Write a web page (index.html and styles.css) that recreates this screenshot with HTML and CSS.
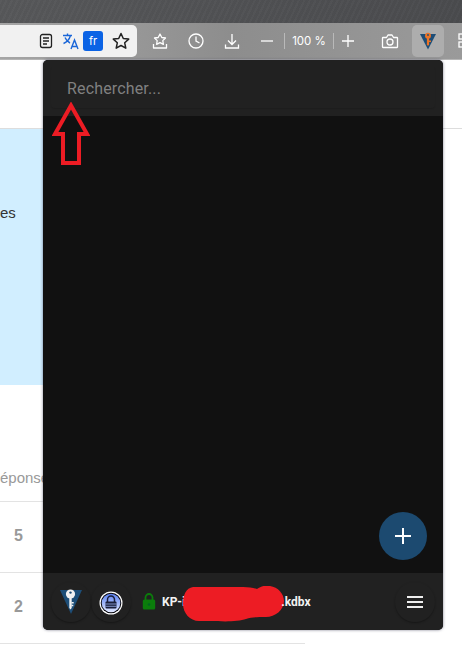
FILE: index.html
```html
<!DOCTYPE html>
<html lang="fr">
<head>
  <meta charset="UTF-8" />
  <meta name="viewport" content="width=device-width, initial-scale=1.0" />
  <title>KeePass popup</title>
  <link rel="stylesheet" href="styles.css">
</head>
<body>

<div class="window">
  <div class="titlebar"></div>

  <!-- Browser toolbar -->
  <div class="toolbar">
    <div class="address">
      <svg class="addr-icon" width="18" height="18" viewBox="0 0 18 18" fill="none" stroke="#222" stroke-width="1.3"><rect x="3.500" y="2.500" width="11" height="13" rx="2"/><path d="M6 6h6M6 9h6M6 12h4"/></svg>
      <svg class="addr-translate" width="18" height="18" viewBox="0 0 18 18" fill="none" stroke="#1a66d8" stroke-width="1.4"><path d="M1 3.500h9M5.500 1.500v2M8.500 3.500C7.500 7 5 10 1.500 11.500M3 5.500c1 2.500 3 4.500 5 5.500"/><path d="M9 17l3.500-9 3.500 9M10.200 14.500h4.600"/></svg>
      <span class="lang">fr</span>
      <svg class="addr-star" width="20" height="20" viewBox="0 0 20 20" fill="none" stroke="#222" stroke-width="1.500" stroke-linejoin="round"><path d="M10 2.500l2.300 5 5.400.6-4 3.700 1.100 5.400-4.800-2.700-4.800 2.700 1.100-5.400-4-3.700 5.400-.6z"/></svg>
    </div>

    <div class="tool tool-first">
      <svg width="18" height="18" viewBox="0 0 18 18" fill="none" stroke="#fff" stroke-width="1.300" stroke-linejoin="round"><path d="M9 2l1.800 3.500 3.700.5-2.700 2.600.6 3.700L9 10.600 5.600 12.300l.6-3.700L3.500 6l3.700-.5z"/><path d="M2.500 12v4h13v-4"/></svg>
    </div>
    <div class="tool">
      <svg width="18" height="18" viewBox="0 0 18 18" fill="none" stroke="#fff" stroke-width="1.300"><circle cx="9" cy="9" r="7"/><path d="M9 4.500V9l3.500 2"/></svg>
    </div>
    <div class="tool">
      <svg width="18" height="18" viewBox="0 0 18 18" fill="none" stroke="#fff" stroke-width="1.300"><path d="M9 2v10M5 8.500l4 4 4-4M2.500 12.500v3.500h13v-3.500"/></svg>
    </div>
    <div class="tool tool-minus">
      <svg width="14" height="14" viewBox="0 0 14 14" fill="none" stroke="#fff" stroke-width="1.300"><path d="M1 7h12"/></svg>
    </div>
    <div class="zoom-level">100 %</div>
    <div class="tool tool-plus">
      <svg width="14" height="14" viewBox="0 0 14 14" fill="none" stroke="#fff" stroke-width="1.300"><path d="M1 7h12M7 1v12"/></svg>
    </div>
    <div class="tool tool-camera">
      <svg width="18" height="18" viewBox="0 0 18 18" fill="none" stroke="#fff" stroke-width="1.300" stroke-linejoin="round"><path d="M2 5.500h3.500L7 3h4l1.500 2.500H16a.5.500 0 0 1 .5.500v9a.5.500 0 0 1-.5.500H2a.5.500 0 0 1-.5-.500V6a.5.500 0 0 1 .5-.500z"/><circle cx="9" cy="10" r="3"/></svg>
    </div>
    <div class="ext-btn">
      <svg width="18" height="18" viewBox="0 0 18 18"><path d="M1 2h16L9 17.500z" fill="#1d4e78"/><circle cx="9" cy="3.800" r="3" fill="#ec7426"/><path d="M7.900 5h2.200v7.500L9 14l-1.100-1.500z" fill="#ec7426"/><path d="M10 8.500h2v1.400h-2z" fill="#ec7426"/><circle cx="9" cy="3" r=".9" fill="#1d4e78"/></svg>
    </div>
    <div class="tool tool-puzzle">
      <svg width="18" height="18" viewBox="0 0 18 18" fill="none" stroke="#fff" stroke-width="1.300"><rect x="2" y="2" width="5" height="5"/><rect x="2" y="10" width="5" height="5"/></svg>
    </div>
  </div>

  <!-- Web page behind the popup -->
  <div class="page">
    <div class="page-head"></div>
    <div class="notice"><span>es</span></div>
    <div class="answers">
      <div class="answers-title">éponses</div>
      <div class="row">5</div>
      <div class="row">2</div>
    </div>
  </div>

  <!-- Extension popup -->
  <div class="popup">
    <div class="popup-head">
      <div class="search">Rechercher...</div>
    </div>
    <div class="popup-body">
      <button class="fab">
        <svg width="18" height="18" viewBox="0 0 18 18" fill="none" stroke="#fff" stroke-width="2"><path d="M1 9h16M9 1v16"/></svg>
      </button>
    </div>
    <div class="popup-foot">
      <div class="round round-logo">
        <svg width="24" height="26" viewBox="0 0 24 26"><path d="M1 1h22L12 25z" fill="#1d4e78"/><circle cx="11.500" cy="5" r="4.600" fill="#f2f2f2"/><circle cx="11.500" cy="3.600" r="1.200" fill="#1d4e78"/><path d="M10.300 8h2.400v11l-1.200 1.500-1.200-1.500z" fill="#f2f2f2"/><path d="M12.500 13h2.200v1.400h-2.200zM12.500 15.800h1.800v1.400h-1.800z" fill="#f2f2f2"/></svg>
      </div>
      <div class="round round-kp">
        <svg width="24" height="24" viewBox="0 0 24 24">
          <defs><linearGradient id="kpBlue" x1="0" y1="0" x2="0" y2="1"><stop offset="0" stop-color="#5a80f2"/><stop offset="1" stop-color="#e2e9ff"/></linearGradient></defs>
          <circle cx="12" cy="12" r="11.500" fill="#fff"/><circle cx="12" cy="12" r="10.300" fill="#06060c"/><circle cx="12" cy="12" r="9.300" fill="url(#kpBlue)"/>
          <path d="M8.500 11V8.500a3.500 3.500 0 0 1 7 0V11" fill="none" stroke="#1a1f3a" stroke-width="1.500"/><rect x="6.500" y="10.500" width="11" height="7" rx="1" fill="#1a1f3a"/><path d="M6.500 13h11M6.500 15.300h11" stroke="#9db2f0" stroke-width=".8"/>
        </svg>
      </div>
      <svg class="db-lock" width="14" height="17" viewBox="0 0 14 17"><path d="M3.500 7V4.500a3.500 3.500 0 0 1 7 0V7" fill="none" stroke="#0b7d0b" stroke-width="1.800"/><rect x=".8" y="6.500" width="12.400" height="10" rx="1.500" fill="#0b7d0b"/><circle cx="7" cy="11.500" r="1.300" fill="#062"/></svg>
      <div class="db-name">
        <span>KP-i</span>
        <span class="blot">
          <svg width="101" height="36" viewBox="0 0 101 36"><path d="M10 1h50c6 0 10 1 14 2 4-3 9-4 13-3 8 1 14 8 14 15 0 9-9 16-18 16-8 0-14 0-20 2-6 2-20 3-28 2H16C7 35 0 27 0 18 0 9 3 2 10 1z" fill="#ed1c24"/></svg>
        </span>
        <span>.kdbx</span>
      </div>
      <div class="round round-menu">
        <svg width="18" height="14" viewBox="0 0 18 14" fill="none" stroke="#eee" stroke-width="1.800"><path d="M1 2h16M1 7h16M1 12h16"/></svg>
      </div>
    </div>
  </div>

  <!-- Annotation arrow drawn on the screenshot -->
  <svg class="arrow" width="38" height="64" viewBox="0 0 38 64" fill="none" stroke="#ed1c24" stroke-width="4"><path d="M19 3.500L3 32H11V61H27V32H35z"/></svg>
</div>

</body>
</html>
```

FILE: styles.css
```css
*, *::before, *::after { box-sizing: border-box; margin: 0; padding: 0; }

body {
  background: #fff;
  font-family: 'Liberation Sans', Arial, sans-serif;
}

.window {
  position: relative;
  width: 462px;
  height: 657px;
  overflow: hidden;
}

.titlebar {
  height: 23px;
  background:
    repeating-linear-gradient(115deg, rgba(255,255,255,.015) 0 2px, rgba(0,0,0,.02) 2px 5px),
    linear-gradient(90deg, #57585a, #4a4b4e);
}

.toolbar {
  display: flex;
  align-items: center;
  height: 37px;
  padding-bottom: 1px;
  background: linear-gradient(90deg, #a5a5a5 0%, #8d8d8d 50%, #9a9a9a 100%);
  border-bottom: 1px solid #b5b5b5;
}

.address {
  display: flex;
  align-items: center;
  flex: none;
  width: 137px;
  height: 32px;
  background: #f1f1f1;
  border-radius: 0 5px 5px 0;
}

.addr-icon { margin-left: 37px; }
.addr-translate { margin-left: 7px; }

.lang {
  width: 20px;
  height: 20px;
  margin-left: 3px;
  background: #0b63e5;
  border-radius: 3px;
  color: #fff;
  font-size: 11px;
  line-height: 20px;
  text-align: center;
  font-family: 'Inter', sans-serif;
}

.addr-star { margin-left: 8px; }

.tool {
  display: flex;
  align-items: center;
  justify-content: center;
  flex: none;
  width: 36px;
  height: 32px;
}

.tool-first { margin-left: 5px; }
.tool-minus { width: 34px; }
.tool-plus { width: 28px; }
.tool-camera { margin-left: 10px; }
.tool-puzzle { margin-left: 4px; }

.zoom-level {
  flex: none;
  width: 50px;
  height: 16px;
  border-left: 1px solid #b9b9b9;
  border-right: 1px solid #b9b9b9;
  color: #fff;
  font-family: 'Inter', sans-serif;
  font-size: 11.500px;
  line-height: 16px;
  text-align: center;
}

.ext-btn {
  display: flex;
  align-items: center;
  justify-content: center;
  flex: none;
  width: 32px;
  height: 32px;
  margin-left: 4px;
  background: #adadad;
  border-radius: 5px;
}

.page {
  color: #333;
}

.page-head {
  height: 69px;
  border-bottom: 1px solid #ddd;
}

.notice {
  width: 300px;
  height: 256px;
  padding-top: 75px;
  background: #d1eeff;
  font-size: 15px;
  line-height: 17px;
}

.answers {
  width: 305px;
  padding-top: 84px;
  color: #999;
}

.answers-title {
  height: 33px;
  border-bottom: 1px solid #e3e3e3;
  font-size: 15px;
  line-height: 17px;
  white-space: nowrap;
}

.row {
  height: 71px;
  padding-left: 14px;
  border-bottom: 1px solid #e3e3e3;
  font-size: 16px;
  font-weight: 700;
  line-height: 68px;
}

/* popup */
.popup {
  position: absolute;
  top: 60px;
  left: 43px;
  display: flex;
  flex-direction: column;
  width: 400px;
  height: 570px;
  background: #111;
  border-radius: 5px;
  overflow: hidden;
  box-shadow: 0 0 3px rgba(40, 40, 70, .6);
}

.popup-head {
  flex: none;
  height: 56px;
  padding: 6px 8px 8px;
  background: #212121;
}

.search {
  height: 42px;
  padding-left: 16px;
  border-radius: 4px;
  box-shadow: 0 1px 1px rgba(0, 0, 0, .12);
  color: #808080;
  font-family: 'Roboto', sans-serif;
  font-size: 16px;
  letter-spacing: .15px;
  line-height: 45px;
}

.popup-body {
  position: relative;
  flex: 1;
}

.fab {
  position: absolute;
  right: 16px;
  bottom: 13px;
  display: flex;
  align-items: center;
  justify-content: center;
  width: 48px;
  height: 48px;
  background: #1c4a70;
  border: none;
  border-radius: 50%;
}

.popup-foot {
  display: flex;
  align-items: center;
  flex: none;
  height: 57px;
  padding: 0 8px;
  background: #212121;
}

.round {
  display: flex;
  align-items: center;
  justify-content: center;
  flex: none;
  width: 40px;
  height: 40px;
  border-radius: 50%;
  box-shadow: 0 1px 2px rgba(0, 0, 0, .35);
}

.round-kp svg { margin-top: 2px; }
.round-menu { margin-left: auto; }

.db-lock { margin-left: 11px; }

.db-name {
  display: flex;
  align-items: center;
  margin-left: 6px;
  color: #f3f3f3;
  font-family: 'Roboto', sans-serif;
  font-size: 12px;
  font-weight: 700;
  white-space: nowrap;
}

.blot {
  display: flex;
  flex: none;
  width: 98px;
  height: 14px;
  margin-left: -2px;
}

.blot svg {
  flex: none;
  margin-top: -9px;
}

.arrow {
  position: absolute;
  top: 102px;
  left: 52px;
}
```
